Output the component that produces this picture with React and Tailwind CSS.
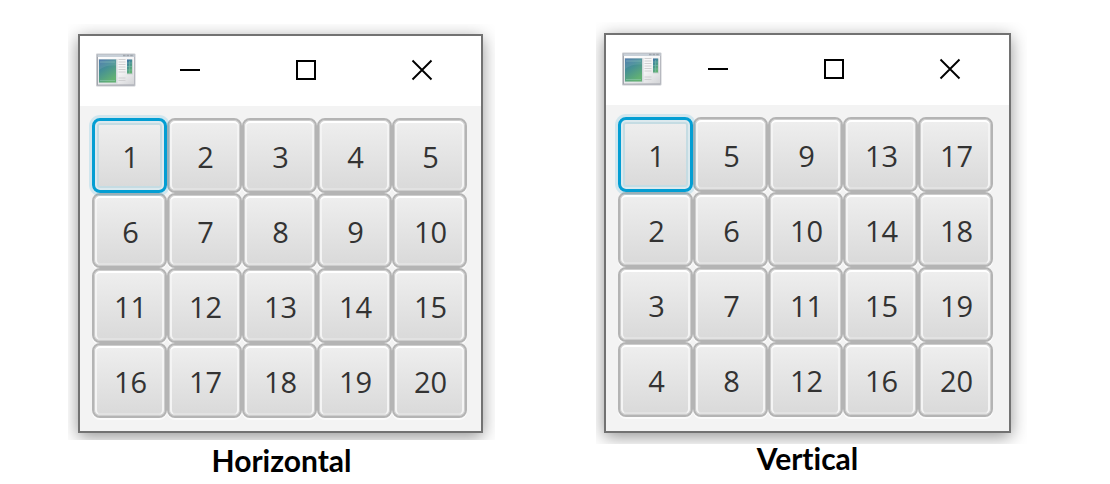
import React from "react";

const COLUMNS = 5;
const ROWS = 4;

const horizontal = Array.from({ length: COLUMNS * ROWS }, (_, i) => i + 1);
const vertical = Array.from(
  { length: COLUMNS * ROWS },
  (_, i) => (i % COLUMNS) * ROWS + Math.floor(i / COLUMNS) + 1
);

function AppIcon({ id }) {
  return (
    <svg width="40" height="34" viewBox="0 0 40 34" aria-hidden="true">
      <defs>
        <linearGradient id={`${id}-pane`} x1="0" y1="0" x2="0.5" y2="1">
          <stop offset="0" stopColor="#3f6fa6" />
          <stop offset="0.45" stopColor="#458f95" />
          <stop offset="1" stopColor="#62b173" />
        </linearGradient>
        <linearGradient id={`${id}-frame`} x1="0" y1="0" x2="1" y2="1">
          <stop offset="0" stopColor="#ffffff" />
          <stop offset="0.6" stopColor="#f4f4f5" />
          <stop offset="1" stopColor="#d3d4d7" />
        </linearGradient>
      </defs>
      <rect x="0" y="0.5" width="39.5" height="33" rx="1" fill="#c9cbd0" />
      <rect x="1" y="1.5" width="37.5" height="31" fill="#a3a6ad" />
      <rect x="2" y="2" width="36" height="29.5" fill={`url(#${id}-frame)`} />
      <rect x="1.5" y="1.5" width="37" height="2.5" fill="#c8d0d8" />
      <path d="M27 2.5h11" stroke="#a0a5ac" strokeWidth="1.5" strokeDasharray="2.6 1" />
      <rect x="2.5" y="6" width="19" height="24.5" fill="#d3d9dc" />
      <rect x="3" y="6.5" width="17" height="23" fill={`url(#${id}-pane)`} />
      <path d="M3 17C8 13 13 12 20 12.5V6.5H3z" fill="#ffffff" opacity="0.09" />
      <path d="M4 9h15M4 27.5h15" stroke="#a4d5c6" strokeWidth="0.7" opacity="0.6" />
      <path
        d="M22.5 6.5h7M22.5 9h7M22.5 11.5h7M22.5 14h7M22.5 16.5h7M22.5 19h7M22.5 25h7M22.5 27.5h7"
        stroke="#d0d0d2"
        strokeWidth="1.2"
      />
      <rect x="31" y="6.5" width="6" height="15" fill="#cdd3d6" />
      <rect x="31" y="6.5" width="5" height="14" fill={`url(#${id}-pane)`} />
      <path d="M31 10h5M31 13.5h5M31 17h5M33.5 8v12" stroke="#8bcab7" strokeWidth="0.6" opacity="0.7" />
    </svg>
  );
}

function TitleButton({ label, children }) {
  return (
    <button type="button" aria-label={label} className="flex h-full w-14 items-center justify-center">
      <svg width="22" height="22" viewBox="0 0 22 22" fill="none" stroke="#000" strokeWidth="2" aria-hidden="true">
        {children}
      </svg>
    </button>
  );
}

function TitleBar({ id }) {
  return (
    <header className="flex h-[70px] items-center justify-between bg-white pr-[31px] pb-[2px] pl-4">
      <AppIcon id={id} />
      <div className="flex h-full gap-[60px]">
        <TitleButton label="Minimize">
          <path d="M1 11h20" />
        </TitleButton>
        <TitleButton label="Maximize">
          <path d="M2 2h18v18H2z" />
        </TitleButton>
        <TitleButton label="Close">
          <path d="M1.5 1.5l19 19M20.5 1.5l-19 19" strokeWidth="1.9" />
        </TitleButton>
      </div>
    </header>
  );
}

const plain =
  "border-2 border-[#b4b4b4] shadow-[0_2px_0_#fbfbfb,inset_0_0_0_1px_#cdcdcd,inset_0_3px_0_#ffffff,inset_3px_0_0_#f4f4f4,inset_-3px_0_0_#f4f4f4,inset_0_-3px_0_#e2e2e2]";
const active =
  "relative border-[3px] border-[#039ed3] shadow-[0_0_0_3px_rgba(3,158,211,0.14),inset_0_0_0_2px_#dce9ee,inset_0_0_0_4px_#c5dce3]";

function NumberGrid({ numbers }) {
  return (
    <div className="grid grid-cols-5">
      {numbers.map((n) => (
        <button
          key={n}
          type="button"
          className={`flex h-[75px] items-center justify-center rounded-[8px] bg-linear-to-b from-[#efefef] to-[#d9d9d9] pt-[2px] pl-[2px] font-['Open_Sans',sans-serif] text-[29px] leading-8 text-[#333333] ${
            n === 1 ? active : plain
          }`}
        >
          {n}
        </button>
      ))}
    </div>
  );
}

function Window({ id, label, numbers, contentClass }) {
  return (
    <section
      aria-label={label}
      className="border-2 border-[#727272] bg-[#f3f3f3] shadow-[0_4px_16px_rgba(0,0,0,0.42)]"
    >
      <TitleBar id={id} />
      <div className={`pt-3 pl-3 ${contentClass}`}>
        <NumberGrid numbers={numbers} />
      </div>
    </section>
  );
}

const caption =
  "text-center font-['Lato',sans-serif] text-[30px] font-bold text-black [font-variant-ligatures:none]";

export default function App() {
  return (
    <main className="grid min-h-screen grid-cols-[427fr_431fr] items-start gap-[101px] bg-white pt-[22px] pr-[83px] pl-[68px]">
      <figure className="pt-[2px]">
        <div className="overflow-hidden pt-[10px] pr-3 pb-[7px] pl-[10px]">
          <Window id="horizontal" label="Horizontal" numbers={horizontal} contentClass="pr-[14px] pb-[13px]" />
        </div>
        <figcaption className={`${caption} leading-10`}>Horizontal</figcaption>
      </figure>
      <figure>
        <div className="overflow-hidden pt-[11px] pr-4 pb-[11px] pl-2">
          <Window id="vertical" label="Vertical" numbers={vertical} contentClass="pr-4 pb-[14px]" />
        </div>
        <figcaption className={`${caption} pr-4 pl-2 leading-7`}>Vertical</figcaption>
      </figure>
    </main>
  );
}
